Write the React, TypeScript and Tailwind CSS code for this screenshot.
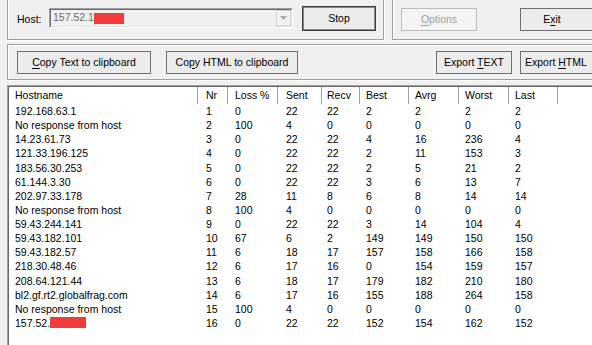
import React from 'react';

type Row = string[];

const rows: Row[] = [
  ['192.168.63.1', '1', '0', '22', '22', '2', '2', '2', '2'],
  ['No response from host', '2', '100', '4', '0', '0', '0', '0', '0'],
  ['14.23.61.73', '3', '0', '22', '22', '4', '16', '236', '4'],
  ['121.33.196.125', '4', '0', '22', '22', '2', '11', '153', '3'],
  ['183.56.30.253', '5', '0', '22', '22', '2', '5', '21', '2'],
  ['61.144.3.30', '6', '0', '22', '22', '3', '6', '13', '7'],
  ['202.97.33.178', '7', '28', '11', '8', '6', '8', '14', '14'],
  ['No response from host', '8', '100', '4', '0', '0', '0', '0', '0'],
  ['59.43.244.141', '9', '0', '22', '22', '3', '14', '104', '4'],
  ['59.43.182.101', '10', '67', '6', '2', '149', '149', '150', '150'],
  ['59.43.182.57', '11', '6', '18', '17', '157', '158', '166', '158'],
  ['218.30.48.46', '12', '6', '17', '16', '0', '154', '159', '157'],
  ['208.64.121.44', '13', '6', '18', '17', '179', '182', '210', '180'],
  ['bl2.gf.rt2.globalfrag.com', '14', '6', '17', '16', '155', '188', '264', '158'],
  ['No response from host', '15', '100', '4', '0', '0', '0', '0', '0'],
  ['157.52.', '16', '0', '22', '22', '152', '154', '162', '152'],
];

const headers = ['Hostname', 'Nr', 'Loss %', 'Sent', 'Recv', 'Best', 'Avrg', 'Worst', 'Last'];

// column widths + text padding, measured off the screenshot
const cols = [
  'w-[189px] pl-[6px]',
  'w-[30px] pl-[8px]',
  'w-[50px] pl-[7px]',
  'w-[44px] pl-[8px]',
  'w-[38px] pl-[5px]',
  'w-[49px] pl-[6px]',
  'w-[50px] pl-[6px]',
  'w-[50px] pl-[6px]',
  'w-[49px] pl-[6px]',
];

const Redacted = ({ w }: { w: string }) => (
  <span className={`inline-block h-[11px] bg-[#f33b3b] align-[-1px] ${w}`} />
);

const Btn = ({ className = '', children, disabled = false }: { className?: string; children: React.ReactNode; disabled?: boolean }) => (
  <div
    className={`flex shrink-0 items-center justify-center border ${
      disabled ? 'border-[#bcbcbc] bg-[#f4f4f4] text-[#a0a0a0]' : 'border-[#707070] bg-[#ececec] text-black'
    } ${className}`}
  >
    <span className="whitespace-nowrap">{children}</span>
  </div>
);

const U = ({ children }: { children: React.ReactNode }) => (
  <span className="underline decoration-1 underline-offset-[2px]">{children}</span>
);

const GroupBox = ({ className = '', children }: { className?: string; children: React.ReactNode }) => (
  <div className={`shrink-0 border border-[#a0a0a0] shadow-[inset_1px_1px_0_#fff,1px_1px_0_#fff] ${className}`}>
    {children}
  </div>
);

export default function App() {
  return (
    <div className="w-[592px] h-[345px] overflow-hidden bg-[#f0f0f0] font-['Liberation_Sans',Arial,sans-serif] text-[10.5px] text-black flex flex-col">
      {/* top row: host + stop / options + exit */}
      <div className="flex h-[41px] shrink-0">
        <GroupBox className="ml-[7px] w-[377px] -mt-[8px] h-[48px]">
          <div className="flex items-start pt-[14px] pl-[9px]">
            <div className="w-[32px] h-[24px] leading-[24px]">Host:</div>
            <div className="mt-px w-[244px] h-[20px] border border-t-[#a0a0a0] border-l-[#a0a0a0] border-b-white border-r-white">
              <div className="flex h-full border border-t-[#696969] border-l-[#696969] border-b-[#e3e3e3] border-r-[#e3e3e3] bg-[#f0f0f0]">
                <div className="flex-1 flex items-center pl-[2px] text-[#6d6d6d] whitespace-nowrap">
                  157.52.1<Redacted w="w-[30px]" />
                </div>
                <div className="w-[15px] h-full flex items-center justify-center border border-[#d6d6d6] bg-[#f2f2f2]">
                  <svg width="7" height="4" viewBox="0 0 7 4">
                    <path d="M0 0h7L3.5 4z" fill="#a8a8a8" />
                  </svg>
                </div>
              </div>
            </div>
            <div className="ml-[9px] -mt-px w-[74px] h-[25px] flex items-center justify-center border border-[#3c3c3c] shadow-[inset_0_0_0_1px_#8a8a8a] bg-[#ececec]">
              Stop
            </div>
          </div>
        </GroupBox>
        <GroupBox className="ml-[8px] w-[220px] -mt-[8px] h-[48px]">
          <div className="flex items-start pt-[15px] pl-[8px]">
            <Btn disabled className="w-[76px] h-[23px]">
              <U>O</U>ptions
            </Btn>
            <Btn className="ml-[43px] w-[76px] h-[23px] pr-[12px]">
              E<U>x</U>it
            </Btn>
          </div>
        </GroupBox>
      </div>

      {/* export buttons */}
      <GroupBox className="mt-[3px] ml-[7px] w-[600px] h-[36px]">
        <div className="flex items-start pt-[6px] pl-[9px]">
          <Btn className="w-[134px] h-[23px]">
            <U>C</U>opy Text to clipboard
          </Btn>
          <Btn className="ml-[15px] w-[132px] h-[23px]">
            Co<U>p</U>y HTML to clipboard
          </Btn>
          <Btn className="ml-[138px] w-[76px] h-[23px]">
            Export <U>T</U>EXT
          </Btn>
          <Btn className="ml-[8px] w-[80px] h-[23px] justify-start pl-[4px]">
            Export <U>H</U>TML
          </Btn>
        </div>
      </GroupBox>

      {/* list view */}
      <div className="mt-[5px] ml-[7px] w-[600px] flex-1 border-t border-l border-[#a0a0a0]">
        <div className="h-full border-t border-l border-[#696969] bg-white">
          <div className="flex h-[17px]">
            {headers.map((h, i) => (
              <div key={h} className={`${cols[i]} shrink-0 h-full flex items-center border-r border-[#a0a0a0] shadow-[inset_1px_0_0_#fff]`}>
                {h}
              </div>
            ))}
          </div>
          {rows.map((r, ri) => (
            <div key={ri} className="flex h-[14.13px] items-center leading-[14px]">
              {r.map((c, ci) => (
                <div key={ci} className={`${cols[ci]} shrink-0 whitespace-nowrap`}>
                  {c}
                  {ri === 15 && ci === 0 && <Redacted w="w-[36px]" />}
                </div>
              ))}
            </div>
          ))}
        </div>
      </div>
    </div>
  );
}
